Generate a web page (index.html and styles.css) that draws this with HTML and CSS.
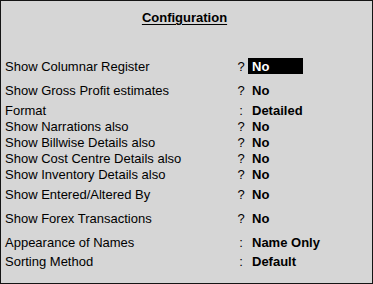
FILE: index.html
```html
<!DOCTYPE html>
<html>
<head>
<meta charset="utf-8">
<link rel="stylesheet" href="styles.css">
</head>
<body>
<div class="frame">
  <div class="title"><span>Configuration</span></div>
  <div class="rows">
    <div class="row first"><span class="label">Show Columnar Register</span><span class="sep">?</span><span class="val"><span class="sel">No</span></span></div>
    <div class="row gap8"><span class="label">Show Gross Profit estimates</span><span class="sep">?</span><span class="val"><span class="txt">No</span></span></div>
    <div class="row gap4"><span class="label">Format</span><span class="sep">:</span><span class="val"><span class="txt">Detailed</span></span></div>
    <div class="row"><span class="label">Show Narrations also</span><span class="sep">?</span><span class="val"><span class="txt">No</span></span></div>
    <div class="row"><span class="label">Show Billwise Details also</span><span class="sep">?</span><span class="val"><span class="txt">No</span></span></div>
    <div class="row"><span class="label">Show Cost Centre Details also</span><span class="sep">?</span><span class="val"><span class="txt">No</span></span></div>
    <div class="row"><span class="label">Show Inventory Details also</span><span class="sep">?</span><span class="val"><span class="txt">No</span></span></div>
    <div class="row gap4"><span class="label">Show Entered/Altered By</span><span class="sep">?</span><span class="val"><span class="txt">No</span></span></div>
    <div class="row gap8"><span class="label">Show Forex Transactions</span><span class="sep">?</span><span class="val"><span class="txt">No</span></span></div>
    <div class="row gap8"><span class="label">Appearance of Names</span><span class="sep">:</span><span class="val"><span class="txt">Name Only</span></span></div>
    <div class="row gap3"><span class="label">Sorting Method</span><span class="sep">:</span><span class="val"><span class="txt">Default</span></span></div>
  </div>
</div>
</body>
</html>
```

FILE: styles.css
```css
html, body {
  margin: 0;
  padding: 0;
  background: #d6d6d6;
}
.frame {
  box-sizing: border-box;
  width: 373px;
  height: 284px;
  border: 1px solid #141414;
  background: #d6d6d6;
  padding: 8px 0 0 4px;
  font-family: "Liberation Sans", Arial, sans-serif;
  font-size: 13px;
  line-height: 18px;
  color: #000;
}
.title {
  text-align: center;
  font-weight: bold;
  height: 16px;
  padding-right: 8px;
}
.title span {
  text-decoration: underline;
  text-underline-offset: 2px;
}
.rows {
  display: flex;
  flex-direction: column;
}
.row {
  display: grid;
  grid-template-columns: 232px 8px 1fr;
  height: 16px;
  white-space: nowrap;
}
.row.first { margin-top: 33px; }
.row.gap8 { margin-top: 8px; }
.row.gap4 { margin-top: 4px; }
.row.gap3 { margin-top: 3px; }
.sep {
  text-align: center;
}
.val {
  font-weight: bold;
  padding-left: 3px;
}
.txt {
  padding-left: 4px;
}
.sel {
  display: block;
  box-sizing: border-box;
  width: 55px;
  height: 16px;
  padding-left: 4px;
  background: #000;
  color: #fff;
}
```
